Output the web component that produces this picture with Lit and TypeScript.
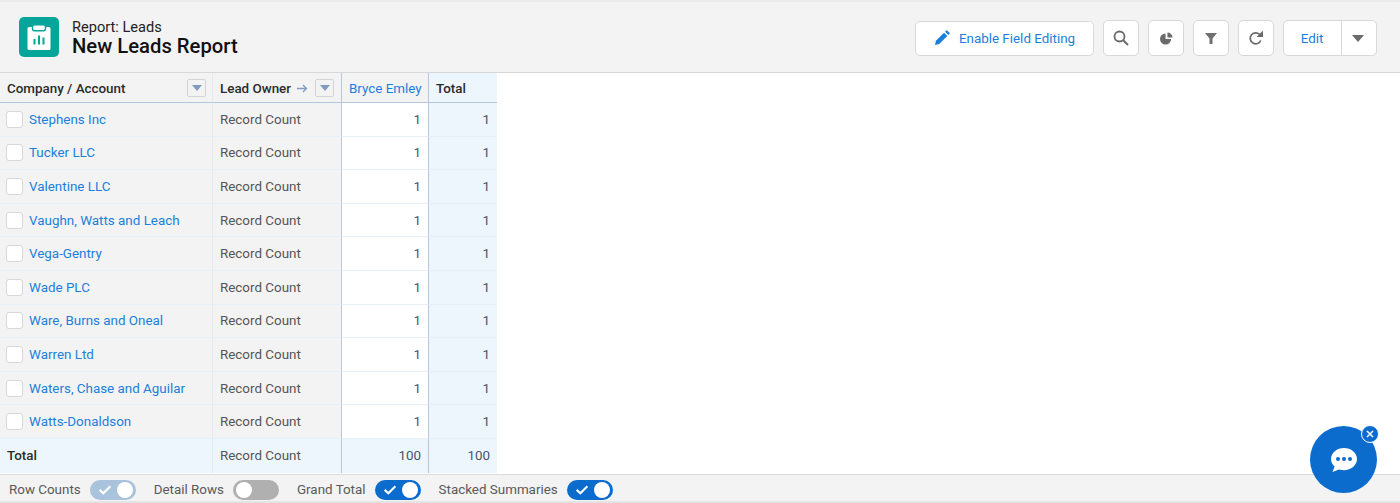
import { LitElement, html, css, svg } from "lit";
import { customElement } from "lit/decorators.js";

const rows = ["Stephens Inc","Tucker LLC","Valentine LLC","Vaughn, Watts and Leach","Vega-Gentry","Wade PLC","Ware, Burns and Oneal","Warren Ltd","Waters, Chase and Aguilar","Watts-Donaldson"];

const caret = svg`<svg width="10" height="6" viewBox="0 0 10 6"><path d="M0 0h10L5 6z" fill="#7f9bbd"/></svg>`;

@customElement("app-root")
export class AppRoot extends LitElement {
  static styles = css`
    :host { display: flex; flex-direction: column; width: 1400px; height: 503px; overflow: hidden; font-family: Roboto, "Liberation Sans", sans-serif; background: #fff; position: relative; color: #3e3e3c; font-size: 13.4px; }
    .head { height: 73px; box-sizing: border-box; flex: none; background: #f3f3f3; border-top: 2px solid #ececec; border-bottom: 1px solid #d8d8d8; display: flex; align-items: center; padding: 0 23px 0 19px; }
    .logo { width: 40px; height: 40px; border-radius: 5px; background: #06a59a; display: flex; align-items: center; justify-content: center; margin-right: 13px; }
    .titles { display: flex; flex-direction: column; flex: 1; margin-top: 1px; }
    .sub { font-size: 14.6px; line-height: 17px; color: #222; margin: 1px 0 -1px; }
    .title { font-size: 20.25px; line-height: 22px; font-weight: 500; color: #111; }
    .btn { box-sizing: border-box; background: #fff; border: 1px solid #d8d8d8; border-radius: 5px; display: flex; align-items: center; justify-content: center; color: #1b7fdc; font-size: 13.4px; margin-top: 2px; }
    .wide { width: 179px; height: 35px; gap: 9px; margin-right: 9px; }
    .sq { width: 36px; height: 36px; margin-right: 9px; }
    .split { width: 94px; height: 36px; display: flex; }
    .split span { display: flex; align-items: center; justify-content: center; }
    .split .a { width: 58px; border-right: 1px solid #d8d8d8; height: 100%; padding-right: 1px; box-sizing: border-box; }
    .split .b { flex: 1; padding-right: 2px; }
    .table { display: grid; grid-template-columns: 213px 129px 87px 68px; grid-template-rows: 30px repeat(11, 33.6px); width: 497px; flex: none; }
    .c { box-sizing: border-box; display: flex; align-items: center; padding: 0 7px; border-bottom: 1px solid #e9eff7; white-space: nowrap; color: #555; }
    .g { background: #f3f3f3; }
    .bl { background: #eef6fd; }
    .wh { background: #fff; }
    .r1 { border-right: 1px solid #e3e9f2; }
    .r2 { border-right: 1px solid #b9c7d9; }
    .h { font-weight: 500; color: #2b2b2b; border-bottom: 1px solid #b5c6da; padding-top: 2px; }
    .hr { padding-right: 6px; }
    .h .grow { flex: 1; }
    .fbtn { width: 19px; height: 18px; box-sizing: border-box; border: 1px solid #d3d3d3; border-radius: 2px; background: #f3f3f3; display: flex; align-items: center; justify-content: center; flex: none; margin-top: -2px; }
    .arrow { margin: 0 7px 0 6px; display: flex; }
    .num { justify-content: flex-end; color: #46546a; }
    .link { color: #1b7fdc; }
    .h.link { font-weight: 400; color: #1b7fdc; }
    .cb { width: 17px; height: 17px; box-sizing: border-box; background: #fff; border: 1px solid #d8d8d8; border-radius: 3px; margin: 0 6px 0 -1px; flex: none; }
    .tot { border-bottom: none; }
    .b { font-weight: 500; color: #2b2b2b; }
    .spacer { flex: 1; }
    .foot { height: 29px; box-sizing: border-box; flex: none; background: #f3f3f3; border-top: 1px solid #dcdcdc; border-bottom: 2px solid #e4e4e4; display: flex; align-items: center; padding: 2px 0 0 9px; color: #5a5a5a; }
    .lab { margin-right: 9px; }
    .tg { width: 46px; height: 20px; border-radius: 10px; position: relative; display: flex; align-items: center; margin: 1px 18px 0 0; box-sizing: border-box; flex: none; }
    .tg.on { background: #0b6cce; }
    .tg.dim { background: #a9c3dc; }
    .tg.off { background: #b0b0b0; }
    .tg .knob { width: 16px; height: 16px; border-radius: 50%; background: #fff; position: absolute; right: 3px; top: 2px; }
    .tg.off .knob { left: 3px; right: auto; }
    .tg svg { margin-left: 8px; }
    .chat { position: absolute; left: 1310px; top: 426px; width: 67px; height: 67px; border-radius: 50%; background: #0b6cce; display: flex; align-items: center; justify-content: center; }
    .x { position: absolute; left: 1361px; top: 425px; width: 18px; height: 18px; box-sizing: border-box; border-radius: 50%; background: #0b6cce; border: 1px solid #fff; display: flex; align-items: center; justify-content: center; }
  `;

  toggle(kind: string) {
    return html`<div class="tg ${kind}">${kind !== "off" ? html`<svg width="14" height="11" viewBox="0 0 17 13"><path d="M2 7l4.500 4L15 2.500" fill="none" stroke="#fff" stroke-width="2.600"/></svg>` : ""}<div class="knob"></div></div>`;
  }

  render() {
    return html`
      <div class="head">
        <div class="logo">
          <svg width="24" height="26" viewBox="0 0 24 26">
            <path d="M2 3h20a1.500 1.500 0 0 1 1.500 1.500v20a1.500 1.500 0 0 1-1.500 1.500H2a1.500 1.500 0 0 1-1.500-1.500v-20A1.500 1.500 0 0 1 2 3z" fill="#fff"/>
            <rect x="5.500" y="0.800" width="13" height="6" rx="2" fill="#fff" stroke="#06a59a" stroke-width="1.400"/>
            <path d="M6.500 15h2v5.500h-2zM11 11.500h2v9h-2zM15.500 13.500h2v7h-2z" fill="#06a59a"/>
          </svg>
        </div>
        <div class="titles"><div class="sub">Report: Leads</div><div class="title">New Leads Report</div></div>
        <div class="btn wide">
          <svg width="16" height="16" viewBox="0 0 16 16"><path d="M1 15l.9-4.200L10 2.700l3.300 3.300-8.100 8.100zM11 1.700l1-1a1 1 0 0 1 1.400 0l1.900 1.900a1 1 0 0 1 0 1.400l-1 1z" fill="#1b7fdc"/></svg>
          Enable Field Editing
        </div>
        <div class="btn sq"><svg width="16" height="16" viewBox="0 0 16 16"><circle cx="6.500" cy="6.500" r="5" fill="none" stroke="#6b6b6b" stroke-width="1.800"/><path d="M10.200 10.200l4.800 4.800" stroke="#6b6b6b" stroke-width="2"/></svg></div>
        <div class="btn sq"><svg width="13" height="13" viewBox="0 0 14 14"><path d="M6 1.500V7.500h6A6 6 0 1 1 6 1.500z" fill="#6b6b6b"/><path d="M8 0.500a5.500 5.500 0 0 1 5.500 5.300H8z" fill="#6b6b6b"/></svg></div>
        <div class="btn sq"><svg width="14" height="14" viewBox="0 0 14 14"><path d="M1 2h12L8.500 7.500V13h-3V7.500z" fill="#707070"/></svg></div>
        <div class="btn sq"><svg width="16" height="16" viewBox="0 0 16 16"><path d="M12.800 10.500A5.500 5.500 0 1 1 11.500 4.300" fill="none" stroke="#6b6b6b" stroke-width="1.700"/><path d="M15 .5v6.500H8.500z" fill="#6b6b6b"/></svg></div>
        <div class="btn split"><span class="a">Edit</span><span class="b"><svg width="12" height="7" viewBox="0 0 12 7"><path d="M0 0h12L6 7z" fill="#6b6b6b"/></svg></span></div>
      </div>
      <div class="table">
        <div class="c g h r1 hr">Company / Account<span class="grow"></span><span class="fbtn">${caret}</span></div>
        <div class="c g h r2 hr">Lead Owner<span class="arrow"><svg width="11" height="9" viewBox="0 0 11 9"><path d="M0 4.500h9M6 1l3.500 3.500L6 8" fill="none" stroke="#7f9bbd" stroke-width="1.300"/></svg></span><span class="fbtn">${caret}</span></div>
        <div class="c g h r2 link">Bryce Emley</div>
        <div class="c bl h">Total</div>
        ${rows.map((n) => html`
          <div class="c g r1"><span class="cb"></span><span class="link">${n}</span></div>
          <div class="c g r2">Record Count</div>
          <div class="c wh r2 num">1</div>
          <div class="c bl num">1</div>
        `)}
        <div class="c bl r1 tot b">Total</div>
        <div class="c bl r2 tot">Record Count</div>
        <div class="c bl r2 num tot">100</div>
        <div class="c bl num tot">100</div>
      </div>
      <div class="spacer"></div>
      <div class="foot">
        <span class="lab">Row Counts</span>${this.toggle("dim")}
        <span class="lab">Detail Rows</span>${this.toggle("off")}
        <span class="lab">Grand Total</span>${this.toggle("on")}
        <span class="lab">Stacked Summaries</span>${this.toggle("on")}
      </div>
      <div class="chat"><svg width="28" height="26" viewBox="0 0 28 26"><path d="M14 1C7 1 1 5.800 1 12c0 3 1.400 5.600 3.600 7.600L2.500 25l6.500-2.500c1.600.5 3.200.7 5 .7 7 0 13-5 13-11.200S21 1 14 1z" fill="#fff"/><circle cx="8" cy="12" r="2" fill="#0b6cce"/><circle cx="14" cy="12" r="2" fill="#0b6cce"/><circle cx="20" cy="12" r="2" fill="#0b6cce"/></svg></div>
      <div class="x"><svg width="8" height="8" viewBox="0 0 8 8"><path d="M1 1l6 6M7 1l-6 6" stroke="#fff" stroke-width="1.500"/></svg></div>
    `;
  }
}
